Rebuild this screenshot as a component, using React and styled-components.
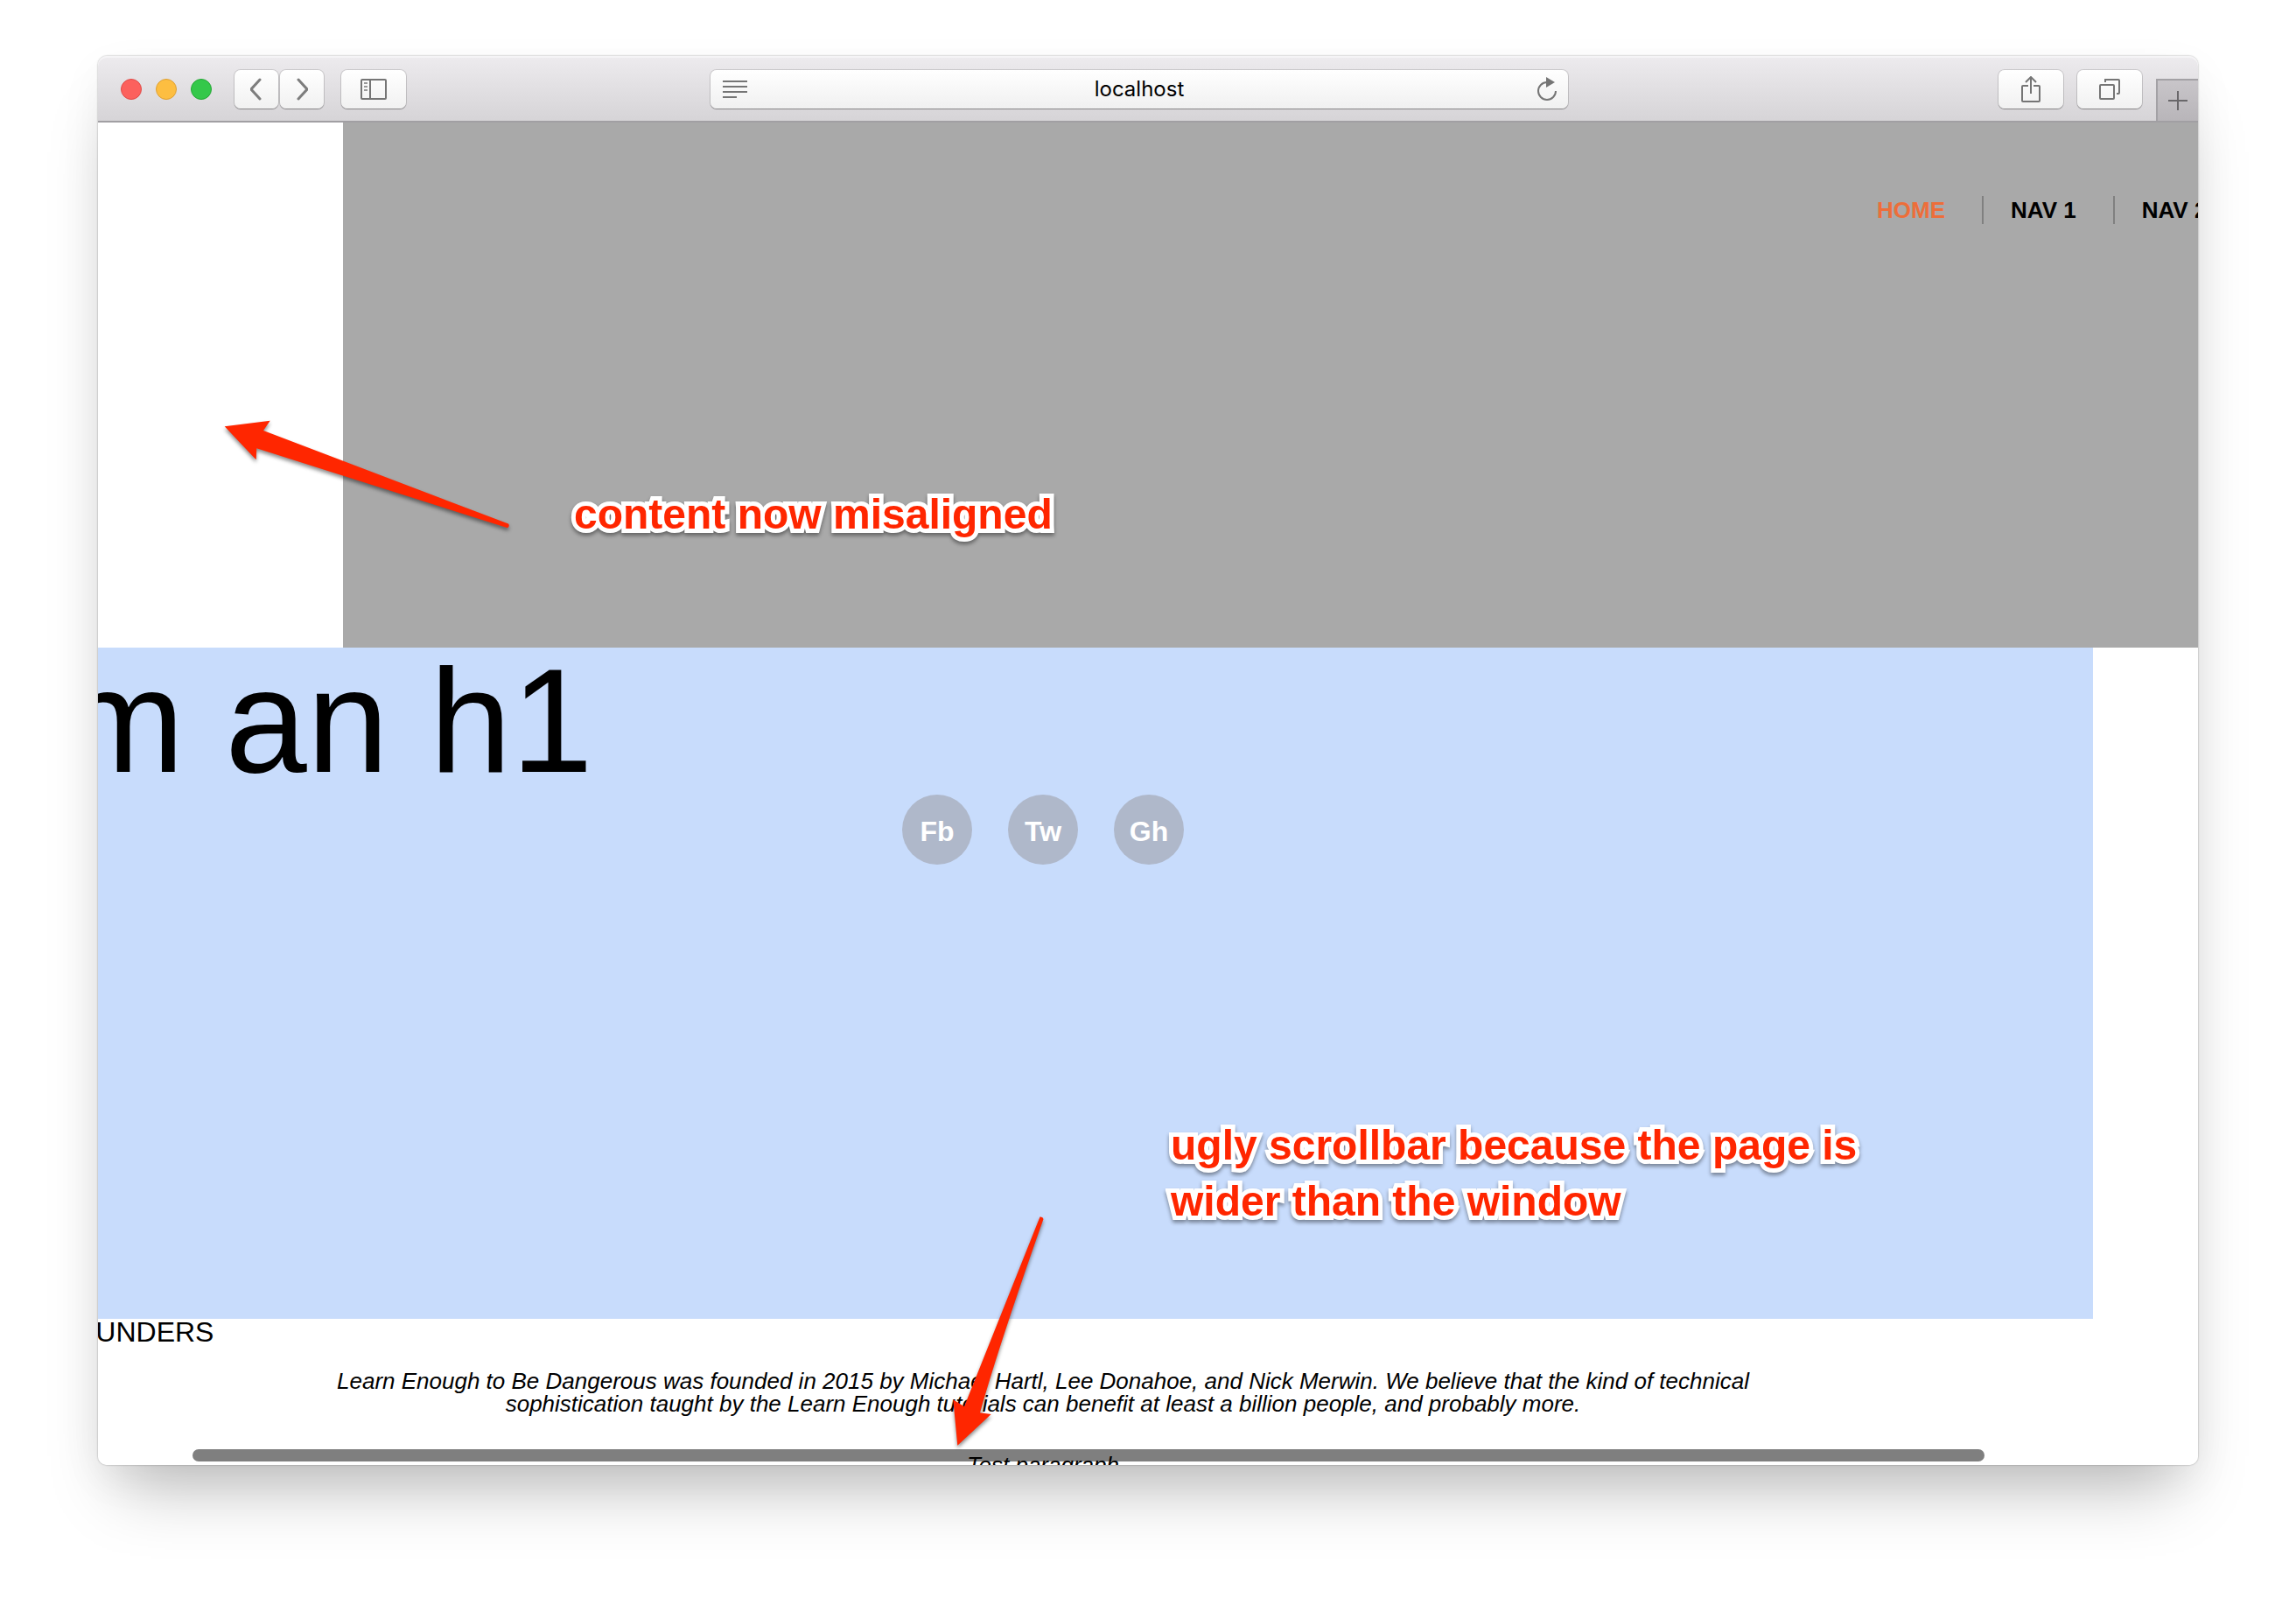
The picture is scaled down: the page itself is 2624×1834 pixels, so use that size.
import React from "react";
import styled, { createGlobalStyle } from "styled-components";

const GlobalStyle = createGlobalStyle`
  * { box-sizing: border-box; }
  body {
    margin: 0;
    background: #fff;
    color: #000;
    font-family: "Liberation Sans", Helvetica, Arial, sans-serif;
  }
  h1, h3, p, ul { margin: 0; padding: 0; }
`;

const Desktop = styled.div`
  padding: 64px 112px 160px;
`;

const BrowserWindow = styled.div`
  position: relative;
  border-radius: 10px;
  box-shadow:
    0 0 2px rgba(0, 0, 0, 0.4),
    0 50px 72px -24px rgba(0, 0, 0, 0.25),
    0 16px 50px rgba(0, 0, 0, 0.05);
`;

const Toolbar = styled.div`
  display: grid;
  grid-template-columns: 35fr 49fr 36fr;
  height: 76px;
  border-bottom: 2px solid #a19fa3;
  border-radius: 10px 10px 0 0;
  background: linear-gradient(#edebee, #d6d4d7);
  box-shadow: inset 0 2px 0 #f5f4f6;
  overflow: hidden;
`;

const ToolGroup = styled.div`
  display: flex;
  align-items: flex-start;
  justify-content: ${(p) => (p.$end ? "flex-end" : "flex-start")};
  padding: 16px 0 0 ${(p) => (p.$end ? "0" : "26px")};
`;

const Lights = styled.div`
  display: flex;
  align-items: center;
  gap: 16px;
  height: 44px;
  margin-right: 26px;
`;

const Light = styled.button`
  width: 24px;
  height: 24px;
  padding: 0;
  border: 1px solid ${(p) => p.$edge};
  border-radius: 50%;
  background: ${(p) => p.$fill};
`;

const ToolButton = styled.button`
  display: flex;
  align-items: center;
  justify-content: center;
  flex: none;
  width: ${(p) => (p.$narrow ? "50px" : "74px")};
  height: 44px;
  margin-right: ${(p) => p.$after};
  padding: 0;
  border: 0;
  border-radius: 7px;
  background: linear-gradient(#fff, #f1f1f1);
  box-shadow: 0 0 0 1px rgba(0, 0, 0, 0.12), 0 1px 1px rgba(0, 0, 0, 0.3);
  color: #757575;
`;

const NewTab = styled.button`
  align-self: flex-end;
  display: flex;
  align-items: center;
  justify-content: center;
  flex: none;
  width: 48px;
  height: 48px;
  padding: 0;
  border: solid #a3a1a5;
  border-width: 2px 0 0 2px;
  background: linear-gradient(#c8c5c9, #b8b5b9);
  color: #69676a;
`;

const AddressBar = styled.div`
  display: flex;
  align-items: center;
  height: 44px;
  margin-top: 16px;
  padding: 0 12px;
  border-radius: 7px;
  background: linear-gradient(#fff, #f0f0f0);
  box-shadow: 0 0 0 1px rgba(0, 0, 0, 0.12), 0 1px 1px rgba(0, 0, 0, 0.3);
  color: #757575;
`;

const IconButton = styled.button`
  display: flex;
  flex: none;
  justify-content: flex-end;
  width: 32px;
  padding: 0;
  border: 0;
  background: none;
  color: inherit;
`;

const Address = styled.input`
  flex: 1;
  min-width: 0;
  height: 44px;
  padding: 0;
  border: 0;
  outline: 0;
  background: none;
  color: #000;
  text-align: center;
  font: 24px/44px Inter, "Liberation Sans", sans-serif;
`;

const Viewport = styled.div`
  position: relative;
  height: calc(100vh - 300px);
  border-radius: 0 0 10px 10px;
  background: #fff;
  overflow: hidden;
`;

const ScrolledPage = styled.div`
  width: 100%;
  margin-left: -120px;
`;

const Header = styled.header`
  height: 600px;
  margin: 0 -400px 0 400px;
  padding: 84px 78px 0 0;
  background: #a9a9a9;
`;

const NavList = styled.ul`
  display: flex;
  justify-content: flex-end;
  list-style: none;
`;

const NavItem = styled.li`
  padding: 0 42px 0 31px;
  line-height: 32px;
  font-size: 26px;
  font-weight: 700;
  & + & { border-left: 2px solid #808080; }
`;

const NavLink = styled.a`
  color: ${(p) => (p.$active ? "#ed6e3a" : "#000")};
  text-decoration: none;
  white-space: nowrap;
`;

const Hero = styled.section`
  height: 767px;
  background: #c8dcfc;
`;

const Title = styled.h1`
  font-size: 168px;
  line-height: 168px;
  font-weight: 400;
`;

const Social = styled.ul`
  display: flex;
  justify-content: center;
  gap: 41px;
  list-style: none;
`;

const SocialLink = styled.a`
  display: block;
  width: 80px;
  height: 80px;
  border-radius: 50%;
  background: #afb8ca;
  color: #fff;
  text-align: center;
  text-decoration: none;
  font-size: 32px;
  font-weight: 700;
  line-height: 84px;
`;

const SectionTitle = styled.h3`
  font-size: 32px;
  line-height: 30px;
  font-weight: 400;
`;

const Bio = styled.p`
  max-width: 70%;
  margin: ${(p) => p.$space} auto 0;
  text-align: center;
  font-size: 26px;
  line-height: 26px;
  font-style: italic;
`;

const ScrollThumb = styled.div`
  position: absolute;
  left: 108px;
  right: 244px;
  bottom: 4px;
  height: 14px;
  border-radius: 7px;
  background: rgba(0, 0, 0, 0.5);
`;

const Note = styled.p`
  position: absolute;
  left: ${(p) => p.$x};
  top: ${(p) => p.$y};
  width: 840px;
  color: #ff2600;
  font-size: 48px;
  line-height: 64px;
  font-weight: 700;
  -webkit-text-stroke: 10px #fff;
  paint-order: stroke fill;
  stroke-linejoin: round;
  filter: drop-shadow(0 3px 2px rgba(0, 0, 0, 0.4));
`;

const Arrow = styled.svg`
  position: absolute;
  left: ${(p) => p.$x};
  top: ${(p) => p.$y};
  fill: #ff2600;
  overflow: visible;
  filter: drop-shadow(0 3px 2px rgba(0, 0, 0, 0.45));
`;

const Chevron = ({ d }) => (
  <svg width="14" height="26" viewBox="0 0 14 26" fill="none" stroke="#7d7d7d" strokeWidth="3" strokeLinecap="round" strokeLinejoin="round">
    <path d={d} />
  </svg>
);

const navItems = ["HOME", "NAV 1", "NAV 2", "NAV 3"];
const socialItems = ["Fb", "Tw", "Gh"];

export default function App() {
  return (
    <Desktop>
      <GlobalStyle />
      <BrowserWindow>
        <Toolbar>
          <ToolGroup>
            <Lights>
              <Light aria-label="Close" $fill="#fc615d" $edge="#e04b48" />
              <Light aria-label="Minimize" $fill="#fdbe41" $edge="#dea034" />
              <Light aria-label="Zoom" $fill="#34c84a" $edge="#25a735" />
            </Lights>
            <ToolButton $narrow $after="2px" aria-label="Back">
              <Chevron d="M11 2 1 13 11 24" />
            </ToolButton>
            <ToolButton $narrow $after="20px" aria-label="Forward">
              <Chevron d="M3 2 13 13 3 24" />
            </ToolButton>
            <ToolButton $after="0" aria-label="Sidebar">
              <svg width="30" height="24" fill="none" stroke="currentColor" strokeWidth="2">
                <rect x="1" y="1" width="28" height="22" rx="1" />
                <path d="M11 1V23" />
                <path d="M4 5H8M4 9H8M4 13H8" stroke="#999" />
              </svg>
            </ToolButton>
          </ToolGroup>
          <AddressBar>
            <IconButton aria-label="Reader">
              <svg width="32" height="24" fill="none" stroke="currentColor" strokeWidth="2">
                <path d="M2 3H30M2 9H30M2 15H30M2 21H18" />
              </svg>
            </IconButton>
            <Address aria-label="Address" defaultValue="localhost" />
            <IconButton aria-label="Reload">
              <svg width="24" height="28" fill="none" stroke="currentColor" strokeWidth="2">
                <path d="M12 6A10 10 0 1 0 22 16" />
                <path d="M11 0 21 6 11 12Z" fill="currentColor" stroke="none" />
              </svg>
            </IconButton>
          </AddressBar>
          <ToolGroup $end>
            <ToolButton $after="16px" aria-label="Share">
              <svg width="22" height="30" fill="none" stroke="currentColor" strokeWidth="2">
                <path d="M8 11H2Q1 11 1 12V28Q1 29 2 29H20Q21 29 21 28V12Q21 11 20 11H14" />
                <path d="M11 20V1M5 7 11 1 17 7" />
              </svg>
            </ToolButton>
            <ToolButton $after="16px" aria-label="Tabs">
              <svg width="24" height="24" fill="none" stroke="currentColor" strokeWidth="2">
                <rect x="1" y="7" width="16" height="16" rx="1" />
                <path d="M7 4V1H22Q23 1 23 2V16Q23 17 22 17H20" />
              </svg>
            </ToolButton>
            <NewTab aria-label="New tab">
              <svg width="22" height="22" stroke="currentColor" strokeWidth="2">
                <path d="M0 11H22M11 0V22" />
              </svg>
            </NewTab>
          </ToolGroup>
        </Toolbar>

        <Viewport>
          <ScrollThumb />
          <ScrolledPage>
            <Header>
              <nav>
                <NavList>
                  {navItems.map((label, i) => (
                    <NavItem key={label}>
                      <NavLink href="#" $active={i === 0}>{label}</NavLink>
                    </NavItem>
                  ))}
                </NavList>
              </nav>
            </Header>
            <Hero>
              <Title>I'm an h1</Title>
              <Social>
                {socialItems.map((label) => (
                  <li key={label}>
                    <SocialLink href="#">{label}</SocialLink>
                  </li>
                ))}
              </Social>
            </Hero>
            <SectionTitle>THE FOUNDERS</SectionTitle>
            <Bio $space="28px">
              Learn Enough to Be Dangerous was founded in 2015 by Michael Hartl, Lee
              Donahoe, and Nick Merwin. We believe that the kind of technical
              sophistication taught by the Learn Enough tutorials can benefit at least
              a billion people, and probably more.
            </Bio>
            <Bio $space="44px">Test paragraph</Bio>
          </ScrolledPage>
        </Viewport>

        <Arrow $x="144px" $y="416px" width="328" height="126">
          <path d="M.7 7.3 52.7.7 45 12 325 118.6Q327 121 324 123.3L37.3 32.3 36.7 45.3Z" />
        </Arrow>
        <Note $x="544px" $y="492px">content now misaligned</Note>
        <Note $x="1226px" $y="1213px">ugly scrollbar because the page is wider than the window</Note>
        <Arrow $x="976px" $y="1326px" width="106" height="262">
          <path d="M6.3 261.7 44.7 226 32 224.3Q54 146 104.5 3Q104 0 100.5 0.5L14 217.3 1.3 209.3Z" />
        </Arrow>
      </BrowserWindow>
    </Desktop>
  );
}
